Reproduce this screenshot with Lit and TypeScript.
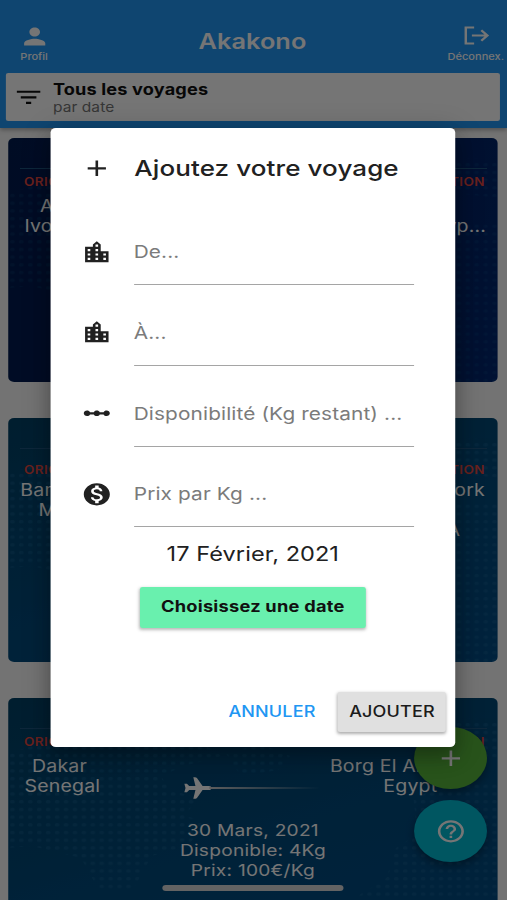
import { LitElement, html, css, svg } from "lit";
import { customElement, property } from "lit/decorators.js";
import { classMap } from "lit/directives/class-map.js";

const ICONS: Record<string, string> = {
  person: "M12 12c2.21 0 4-1.79 4-4s-1.79-4-4-4-4 1.79-4 4 1.79 4 4 4zm0 2c-2.67 0-8 1.34-8 4v2h16v-2c0-2.66-5.33-4-8-4z",
  filter: "M10 18h4v-2h-4v2zM3 6v2h18V6H3zm3 7h12v-2H6v2z",
  city: "M15 11V5l-3-3-3 3v2H3v14h18V11h-6zm-8 8H5v-2h2v2zm0-4H5v-2h2v2zm0-4H5V9h2v2zm6 8h-2v-2h2v2zm0-4h-2v-2h2v2zm0-4h-2V9h2v2zm0-4h-2V5h2v2zm6 12h-2v-2h2v2zm0-4h-2v-2h2v2z",
  scale: "M19.5 9.5c-1.03 0-1.9.62-2.29 1.5h-2.92c-.39-.88-1.26-1.5-2.29-1.5s-1.9.62-2.29 1.5H6.79c-.39-.88-1.26-1.5-2.29-1.5C3.12 9.5 2 10.62 2 12s1.12 2.5 2.5 2.5c1.03 0 1.9-.62 2.29-1.5h2.92c.39.88 1.26 1.5 2.29 1.5s1.9-.62 2.29-1.5h2.92c.39.88 1.26 1.5 2.29 1.5 1.38 0 2.5-1.12 2.5-2.5s-1.12-2.5-2.5-2.5z",
  money: "M12 2C6.48 2 2 6.48 2 12s4.48 10 10 10 10-4.48 10-10S17.52 2 12 2zm1.41 16.09V20h-2.67v-1.93c-1.71-.36-3.16-1.46-3.27-3.4h1.96c.1 1.05.82 1.87 2.65 1.87 1.96 0 2.4-.98 2.4-1.59 0-.83-.44-1.61-2.67-2.14-2.48-.6-4.18-1.62-4.18-3.67 0-1.72 1.39-2.84 3.11-3.21V4h2.67v1.95c1.86.45 2.79 1.86 2.85 3.39H14.3c-.05-1.11-.64-1.87-2.22-1.87-1.5 0-2.4.68-2.4 1.64 0 .84.65 1.39 2.67 1.91s4.18 1.39 4.18 3.91c-.01 1.83-1.38 2.83-3.12 3.16z",
  help: "M11 18h2v-2h-2v2zm1-16C6.48 2 2 6.48 2 12s4.48 10 10 10 10-4.48 10-10S17.52 2 12 2zm0 18c-4.41 0-8-3.59-8-8s3.59-8 8-8 8 3.59 8 8-3.59 8-8 8zm0-14c-2.21 0-4 1.79-4 4h2c0-1.1.9-2 2-2s2 .9 2 2c0 2-3 1.75-3 5h2c0-2.25 3-2.5 3-5 0-2.21-1.79-4-4-4z",
  add: "M19 13h-6v6h-2v-6H5v-2h6V5h2v6h6v2z",
  plane: "M23 12c0-1.1-1-1.9-2.2-1.9h-4.9L11.6 3C11.2 2.3 10.6 2 9.8 2H8.6l1.7 8.1H5.4L3.6 8H1.6L2.5 12l-.9 4h2l1.8-2.1h4.9L8.6 22h1.2c.8 0 1.4-.3 1.8-1l4.3-7.1h4.9c1.2 0 2.2-.8 2.2-1.9z",
  logout: "M2 2.5h8.5v2.2H4.2v14.6h6.3v2.2H2zM8.5 10.9h11.2l-3.6-3.6 1.5-1.5 6.2 6.2-6.2 6.2-1.5-1.5 3.6-3.6H8.5z",
};

@customElement("md-icon")
class MdIcon extends LitElement {
  @property() name = "";
  static styles = css`
    :host { display: block; flex: none; width: 26.6px; height: 26.6px; }
    svg { display: block; width: 100%; height: 100%; fill: currentColor; }
  `;
  render() {
    return html`<svg viewBox="0 0 24 24"><path d=${ICONS[this.name]}></path></svg>`;
  }
}

interface Trip {
  navy?: boolean;
  low?: boolean;
  from: string[];
  to: string[];
  align: string;
  info: string[];
}

const TRIPS: Trip[] = [
  { navy: true, from: ["Abidjan\u00a0", "Ivory Coast"], to: ["", "Egyp..."], align: "end", info: [] },
  { low: true, from: ["Bamako", "Mali"], to: ["New York", "NY", "USA"], align: "center", info: [] },
  { from: ["Dakar\u00a0", "Senegal"], to: ["Borg El A...", "Egypt"], align: "inset", info: ["30 Mars, 2021", "Disponible: 4Kg", "Prix: 100€/Kg"] },
];

@customElement("trip-card")
class TripCard extends LitElement {
  @property({ attribute: false }) trip!: Trip;
  static styles = css`
    :host { display: block; height: 244px; flex: none; }
    .card { position: relative; height: 100%; box-sizing: border-box; padding-top: 30px; border-radius: 5px; overflow: hidden;
      background: linear-gradient(160deg, #004267, #004b7d 55%, #004c85); }
    .navy { background: linear-gradient(100deg, #001c50, #00205a 60%, #002670); }
    .map { position: absolute; inset: 0; width: 100%; height: 100%; opacity: .32; }
    .navy .map { opacity: .16; }
    .content { position: relative; }
    .rule { height: 1px; margin: 0 9px 0 10px; background: #1f5680; }
    .labels { display: flex; justify-content: space-between; margin: 5px 11px 0 13.6px; height: 16px; line-height: 16px;
      color: #e4483f; font-size: 11.5px; font-weight: 600; letter-spacing: .35px; }
    .ends { display: flex; justify-content: space-between; padding: 6px 10px 0 14px; height: 61px; line-height: 20px; box-sizing: border-box;
      font-size: 16.6px; letter-spacing: .15px; color: #fff; text-align: center; }
    .low .labels { margin-top: 13px; }
    .low .ends { padding: 2px 11px 0 10.5px; }
    .end { text-align: right; }
    .inset { text-align: right; padding-right: 41.5px; }
    .inset :first-child { padding-right: 3.4px; }
    .route { display: flex; align-items: center; gap: 0; position: absolute; left: 148px; top: 47px; color: #fff; }
    .route md-icon { width: 26px; height: 26px; }
    .line { width: 94px; height: 1.5px; margin-left: -2.5px; background: linear-gradient(90deg, #ccc, transparent); }
    .info { padding-top: 8.5px; text-align: center; font-size: 16.3px; line-height: 20px; letter-spacing: .2px; color: #fff; }
  `;
  render() {
    const t = this.trip;
    return html`<div class=${classMap({ card: true, navy: !!t.navy, low: !!t.low })}>
      <svg class="map" viewBox="0 0 417 244" preserveAspectRatio="none">
        <defs>
          <pattern id="dots" width="7.6" height="7.7" patternUnits="userSpaceOnUse">
            <rect x="1.6" y="2" width="4" height="3.4" rx="1.5" fill="#2a6f9f"></rect>
          </pattern>
        </defs>
        ${svg`<path fill="url(#dots)" d="M0 55L45 40L110 46L160 42L182 58L150 68L130 78L138 92L162 100L150 118L172 124L152 148L122 158L108 188L98 194L76 190L62 160L20 148L0 150Z
          M185 55L215 46L240 58L230 72L198 78Z M345 30L395 20L417 24V60L345 50Z
          M345 100L380 84L417 86V244H262L280 222L300 196L322 180L330 150L348 136Z"></path>`}
      </svg>
      <div class="content">
        <div class="rule"></div>
        <div class="labels"><span>ORIGINE</span><span>DESTINATION</span></div>
        <div class="ends">
          <div>${t.from.map((l) => html`<div>${l}</div>`)}</div>
          <div class=${t.align}>${t.to.map((l) => html`<div>${l || "\u00a0"}</div>`)}</div>
        </div>
        ${t.info.length
          ? html`<div class="route"><md-icon name="plane"></md-icon><div class="line"></div></div>
              <div class="info">${t.info.map((l) => html`<div>${l}</div>`)}</div>`
          : ""}
      </div>
    </div>`;
  }
}

const FIELDS = [
  { icon: "city", hint: "De..." },
  { icon: "city", hint: "À..." },
  { icon: "scale", hint: "Disponibilité (Kg restant) ..." },
  { icon: "money", hint: "Prix par Kg ..." },
];

@customElement("add-dialog")
class AddDialog extends LitElement {
  static styles = css`
    :host { display: block; box-sizing: border-box; width: 344.6px; height: 618.5px; background: #fff; border-radius: 4.5px; color: #212121;
      box-shadow: 0 10px 16px rgba(0,0,0,.2), 0 4px 26px rgba(0,0,0,.22); }
    .title { display: flex; align-items: center; padding-left: 26.5px; height: 80px; gap: 18.5px;
      font-size: 22.1px; font-weight: 500; letter-spacing: .08px; }
    .field { display: flex; align-items: flex-start; gap: 18px; padding-left: 26.5px; height: 80.8px; }
    .field md-icon { margin-top: 30.6px; }
    .input { width: 238px; height: 77px; box-sizing: border-box; border-bottom: 1.3px solid #a5a5a5; line-height: 24px; padding-top: 32px;
      font-size: 17.7px; letter-spacing: .1px; color: #7b7b7b; }
    .date { text-align: center; height: 30px; line-height: 30px; margin-top: 8px; font-size: 20px; letter-spacing: .05px; }
    .pick { width: 192px; height: 41px; line-height: 39px; margin: 18px auto 0; text-align: center; background: #69f0ae; border-radius: 2.2px;
      color: #111; font-size: 15.5px; font-weight: 700; letter-spacing: .2px; box-shadow: 0 1.5px 3px rgba(0,0,0,.28); }
    .actions { display: flex; justify-content: flex-end; align-items: center; gap: 19px; padding: 64px 8px 0 0;
      font-size: 15.3px; font-weight: 500; letter-spacing: .13px; line-height: 39px; }
    .cancel { color: #2196f3; line-height: 37px; padding-bottom: 2px; }
    .ok { width: 92px; height: 40px; text-align: center; background: #e0e0e0; border-radius: 2.2px; color: #1b1b1b; box-shadow: 0 1.5px 3px rgba(0,0,0,.32); }
  `;
  render() {
    return html`<div class="title"><md-icon name="add"></md-icon><span>Ajoutez votre voyage</span></div>
      ${FIELDS.map((f) => html`<div class="field"><md-icon name=${f.icon}></md-icon><div class="input">${f.hint}</div></div>`)}
      <div class="date">17 Février, 2021</div>
      <div class="pick">Choisissez une date</div>
      <div class="actions"><span class="cancel">ANNULER</span><div class="ok">AJOUTER</div></div>`;
  }
}

@customElement("app-root")
class AppRoot extends LitElement {
  static styles = css`
    :host { display: block; width: 507px; height: 900px; overflow: hidden; font-family: Inter, "Open Sans", sans-serif; }
    .stage { position: relative; width: 431px; height: 900px; overflow: hidden; background: #fafafa;
      transform: scaleX(1.17633); transform-origin: 0 0; }
    .header { box-sizing: border-box; height: 128px; padding: 23px 5.8px 0 5px; background: #2196f3; color: #fff; box-shadow: 0 2px 4px rgba(0,0,0,.3); }
    .bar { display: grid; grid-template-columns: 48px 1fr 48px; height: 50px; }
    .side { display: flex; flex-direction: column; align-items: center; font-size: 9.4px; font-weight: 500; line-height: 14px; white-space: nowrap; }
    .side md-icon { width: 27px; height: 27px; margin-top: -.5px; margin-bottom: .5px; }
    .out { margin-right: -6.5px; }
    .out md-icon { width: 23px; height: 23px; margin: 1px 0 3px 1px; }
    .brand { text-align: center; line-height: 37px; font-size: 21.5px; font-weight: 600; letter-spacing: .05px; padding-right: 1px; }
    .filter { display: flex; align-items: center; height: 48px; box-sizing: border-box; padding: 0 6.2px; gap: 7.2px; background: #fff; border-radius: 2px; color: #111; }
    .all { font-size: 15.4px; font-weight: 700; line-height: 17px; padding-top: 2px; letter-spacing: .15px; }
    .by { font-size: 13.2px; line-height: 18px; letter-spacing: .07px; color: #777; }
    .list { display: flex; flex-direction: column; gap: 36px; padding: 10px 7.8px 0 6.8px; height: 762px; overflow: hidden; }
    .fabs { position: absolute; right: 17px; top: 727px; display: flex; flex-direction: column; gap: 11px; }
    .fab { display: grid; place-items: center; width: 62px; height: 62px; border-radius: 50%; background: #57b53b; color: #fff; box-shadow: 0 4px 8px rgba(0,0,0,.35); }
    .teal { background: #00bcd4; }
    .home { position: absolute; left: 138px; bottom: 9px; width: 154px; height: 6px; border-radius: 3px; background: #d8d8d8; }
    .scrim { position: absolute; inset: 0; background: rgba(0,0,0,.54); }
    add-dialog { position: absolute; left: 42.6px; top: 128px; }
  `;
  render() {
    return html`<div class="stage">
      <div class="header">
        <div class="bar">
          <div class="side"><md-icon name="person"></md-icon>Profil</div>
          <div class="brand">Akakono</div>
          <div class="side out"><md-icon name="logout"></md-icon>Déconnex.</div>
        </div>
        <div class="filter"><md-icon name="filter"></md-icon>
          <div><div class="all">Tous les voyages</div><div class="by">par date</div></div>
        </div>
      </div>
      <div class="list">${TRIPS.map((t) => html`<trip-card .trip=${t}></trip-card>`)}</div>
      <div class="fabs">
        <div class="fab"><md-icon name="add"></md-icon></div>
        <div class="fab teal"><md-icon name="help"></md-icon></div>
      </div>
      <div class="home"></div>
      <div class="scrim"></div>
      <add-dialog></add-dialog>
    </div>`;
  }
}
